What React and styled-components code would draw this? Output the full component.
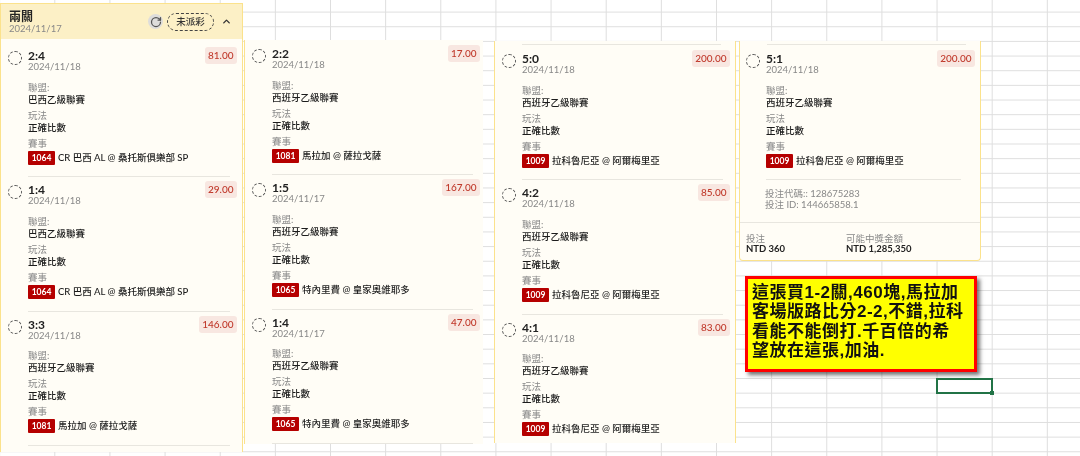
import React from 'react';
import styled, { createGlobalStyle } from 'styled-components';
import { RotateCw, ChevronUp } from 'lucide-react';

const GlobalStyle = createGlobalStyle`
  html, body {
    margin: 0;
    padding: 0;
    background: #fff;
  }
  body {
    font-family: Lato, "Noto Sans CJK TC", sans-serif;
  }
`;

// the spreadsheet the screenshots were pasted on
const Sheet = styled.div`
  position: relative;
  width: 1080px;
  height: 456px;
  overflow: hidden;
  background-color: #fff;
  background-image:
    linear-gradient(to right, #dedede 1px, transparent 1px),
    linear-gradient(to bottom, #dedede 1px, transparent 1px);
  background-size: 55.15px 14.66px;
  background-position: 54.3px 11.6px;
  filter: blur(0.25px);
`;

// a pasted picture: where it lies on the sheet is the content itself
const Pasted = styled.section`
  position: absolute;
  left: ${(p) => p.$x}px;
  top: ${(p) => p.$y}px;
  width: ${(p) => p.$w}px;
  height: ${(p) => p.$h}px;
  box-sizing: border-box;
  background: #fffdf6;
  overflow: hidden;
  border-left: ${(p) => (p.$left ? '1.5px solid #fbe28c' : 'none')};
  border-right: ${(p) => (p.$right ? '1.5px solid #fbe28c' : 'none')};
  border-bottom: ${(p) => (p.$bottom ? '1.5px solid #fbe28c' : 'none')};
  border-top: ${(p) => (p.$top ? '1.5px solid #fbe28c' : 'none')};
  border-radius: ${(p) => (p.$rounded ? '0 0 4px 4px' : '0')};
`;

const Header = styled.header`
  height: 35px;
  display: flex;
  align-items: center;
  padding: 0 10px 0 8px;
  background: #fcf0c6;
`;

const HeaderText = styled.div`
  flex: 1;
  display: flex;
  flex-direction: column;
`;

const HeaderTitle = styled.div`
  font-size: 12px;
  line-height: 13px;
  font-weight: 700;
  color: #222;
`;

const HeaderDate = styled.div`
  font-size: 9.5px;
  line-height: 11px;
  color: #888;
`;

const RefreshBtn = styled.span`
  width: 15px;
  height: 15px;
  border-radius: 50%;
  background: #dedddb;
  color: #555;
  display: flex;
  align-items: center;
  justify-content: center;
  margin-right: 4px;
`;

const StatusPill = styled.span`
  width: 47px;
  height: 18px;
  box-sizing: border-box;
  border: 1px dashed #444;
  border-radius: 9px;
  font-size: 9.5px;
  font-weight: 500;
  line-height: 16px;
  text-align: center;
  color: #333;
  margin-right: 7px;
`;

const Bets = styled.div`
  display: flex;
  flex-direction: column;
  padding: ${(p) => p.$top}px ${(p) => p.$right}px 0 ${(p) => p.$left}px;
`;

const Bet = styled.article`
  height: 134.4px;
  box-sizing: border-box;
  display: grid;
  grid-template-columns: 20.5px 1fr auto;
  align-content: start;
  position: relative;
`;

const Spinner = styled.span`
  width: 14px;
  height: 14px;
  box-sizing: border-box;
  border: 1px dashed #555;
  border-radius: 50%;
  margin-top: 3px;
`;

const Score = styled.div`
  font-size: 12px;
  line-height: 13px;
  font-weight: 700;
  color: #222;
  margin-top: 1px;
`;

const BetDate = styled.div`
  font-size: 9.5px;
  line-height: 10px;
  color: #888;
`;

const Price = styled.span`
  height: 17px;
  padding: 0 3px;
  border-radius: 3px;
  background: #f8e7e1;
  color: #c0392b;
  font-size: 10px;
  line-height: 17px;
  font-weight: 500;
  margin-top: -1px;
`;

const Details = styled.div`
  grid-column: 2 / 4;
  margin-top: 9.5px;
  display: flex;
  flex-direction: column;
  gap: 5px;
`;

const Field = styled.div`
  display: flex;
  flex-direction: column;
`;

const Label = styled.div`
  font-size: 9.5px;
  line-height: 12px;
  color: #888;
`;

const Value = styled.div`
  font-size: 9.5px;
  line-height: 11px;
  font-weight: 500;
  color: #1c1c1c;
  display: flex;
  align-items: center;
  gap: 3px;
`;

const MatchBadge = styled.span`
  width: 27px;
  height: 14px;
  background: #b50000;
  color: #fff;
  font-size: 8.5px;
  font-weight: 700;
  line-height: 14px;
  text-align: center;
  border-radius: 1px;
  margin-top: 1px;
`;

const Divider = styled.hr`
  border: none;
  height: 1px;
  margin: 0;
  background: #e8e6df;
  position: absolute;
  left: 20.5px;
  right: ${(p) => p.$right ?? 7}px;
  bottom: 5px;
`;

const TopRule = styled.hr`
  border: none;
  height: 1px;
  margin: 3px 14px 0 27px;
  background: #e8e6df;
`;

const Codes = styled.div`
  margin: 3px 0 0 25px;
  font-size: 9.5px;
  line-height: 11px;
  color: #888;
`;

const Totals = styled.div`
  margin-top: 12px;
  border-top: 1px solid #e8e6df;
  padding: 10px 6px 0;
  display: grid;
  grid-template-columns: 100px 1fr;
`;

const TotalLabel = styled.div`
  font-size: 9.5px;
  line-height: 11px;
  color: #888;
`;

const TotalValue = styled.div`
  font-size: 9.5px;
  line-height: 10px;
  font-weight: 700;
  color: #222;
`;

// the yellow note drawn over the sheet
const Note = styled.div`
  position: absolute;
  left: 745px;
  top: 276px;
  width: 232px;
  height: 96px;
  box-sizing: border-box;
  background: #ffff00;
  border: 3px solid #ff0000;
  box-shadow: 3px 3px 4px rgba(0, 0, 0, 0.55);
  padding: 4px 4px;
  font-family: "Liberation Sans", "Noto Sans CJK TC", sans-serif;
  font-size: 17px;
  line-height: 19.4px;
  font-weight: 700;
  color: #111;
  white-space: nowrap;
`;

const NoteLine = styled.div`
  letter-spacing: 0.5px;
`;

const ActiveCell = styled.div`
  position: absolute;
  left: 936px;
  top: 378px;
  width: 57px;
  height: 16px;
  box-sizing: border-box;
  border: 2px solid #217346;
  &::after {
    content: '';
    position: absolute;
    right: -3px;
    bottom: -3px;
    width: 4px;
    height: 4px;
    background: #217346;
  }
`;

const BRAZIL = '巴西乙級聯賽';
const SPAIN = '西班牙乙級聯賽';
const M1064 = { code: '1064', name: 'CR 巴西 AL @ 桑托斯俱樂部 SP' };
const M1081 = { code: '1081', name: '馬拉加 @ 薩拉戈薩' };
const M1065 = { code: '1065', name: '特內里費 @ 皇家奧維耶多' };
const M1009 = { code: '1009', name: '拉科魯尼亞 @ 阿爾梅里亞' };

const columns = [
  {
    key: 'a', x: 0, y: 3, w: 243, h: 449, top: 9, pl: 6.5, pr: 5.5, left: true, right: true, header: true,
    bets: [
      { score: '2:4', date: '2024/11/18', price: '81.00', league: BRAZIL, match: M1064 },
      { score: '1:4', date: '2024/11/18', price: '29.00', league: BRAZIL, match: M1064 },
      { score: '3:3', date: '2024/11/18', price: '146.00', league: SPAIN, match: M1081 },
    ],
  },
  {
    key: 'b', x: 244, y: 40, w: 239, h: 404, top: 6, pl: 6.5, pr: 3.5, left: true,
    bets: [
      { score: '2:2', date: '2024/11/18', price: '17.00', league: SPAIN, match: M1081 },
      { score: '1:5', date: '2024/11/17', price: '167.00', league: SPAIN, match: M1065 },
      { score: '1:4', date: '2024/11/17', price: '47.00', league: SPAIN, match: M1065 },
    ],
  },
  {
    key: 'c', x: 494, y: 41, w: 242, h: 402, top: 6, pl: 6.5, pr: 5.5, left: true, right: true, rule: true,
    bets: [
      { score: '5:0', date: '2024/11/18', price: '200.00', league: SPAIN, match: M1009 },
      { score: '4:2', date: '2024/11/18', price: '85.00', league: SPAIN, match: M1009 },
      { score: '4:1', date: '2024/11/18', price: '83.00', league: SPAIN, match: M1009 },
    ],
  },
];

const noteLines = [
  '這張買1-2關,460塊,馬拉加',
  '客場版路比分2-2,不錯,拉科',
  '看能不能倒打.千百倍的希',
  '望放在這張,加油.',
];

const BetRow = ({ bet, ruleRight }) => (
  <Bet>
    <Spinner />
    <div>
      <Score>{bet.score}</Score>
      <BetDate>{bet.date}</BetDate>
    </div>
    <Price>{bet.price}</Price>
    <Details>
      <Field>
        <Label>聯盟:</Label>
        <Value>{bet.league}</Value>
      </Field>
      <Field>
        <Label>玩法</Label>
        <Value>正確比數</Value>
      </Field>
      <Field>
        <Label>賽事</Label>
        <Value>
          <MatchBadge>{bet.match.code}</MatchBadge>
          {bet.match.name}
        </Value>
      </Field>
    </Details>
    <Divider $right={ruleRight} />
  </Bet>
);

const App = () => {
  return (
    <>
      <GlobalStyle />
      <Sheet>
        {columns.map((col) => (
          <Pasted key={col.key} $x={col.x} $y={col.y} $w={col.w} $h={col.h} $left={col.left} $right={col.right} $top={col.header}>
            {col.header && (
              <Header>
                <HeaderText>
                  <HeaderTitle>兩關</HeaderTitle>
                  <HeaderDate>2024/11/17</HeaderDate>
                </HeaderText>
                <RefreshBtn><RotateCw size={12} strokeWidth={2.5} /></RefreshBtn>
                <StatusPill>未派彩</StatusPill>
                <ChevronUp size={11} strokeWidth={3} color="#333" />
              </Header>
            )}
            {col.rule && <TopRule />}
            <Bets $top={col.top} $left={col.pl} $right={col.pr}>
              {col.bets.map((bet) => (
                <BetRow key={bet.score} bet={bet} />
              ))}
            </Bets>
          </Pasted>
        ))}

        <Pasted $x={739} $y={41} $w={242} $h={220} $left $right $bottom $rounded>
          <TopRule />
          <Bets $top={6} $left={5.5} $right={5.5}>
            <BetRow ruleRight={14} bet={{ score: '5:1', date: '2024/11/18', price: '200.00', league: SPAIN, match: M1009 }} />
          </Bets>
          <Codes>
            <div>投注代碼:: 128675283</div>
            <div>投注 ID: 144665858.1</div>
          </Codes>
          <Totals>
            <div>
              <TotalLabel>投注</TotalLabel>
              <TotalValue>NTD 360</TotalValue>
            </div>
            <div>
              <TotalLabel>可能中獎金額</TotalLabel>
              <TotalValue>NTD 1,285,350</TotalValue>
            </div>
          </Totals>
        </Pasted>

        <Note>
          {noteLines.map((line) => (
            <NoteLine key={line}>{line}</NoteLine>
          ))}
        </Note>
        <ActiveCell />
      </Sheet>
    </>
  );
};

export default App;
